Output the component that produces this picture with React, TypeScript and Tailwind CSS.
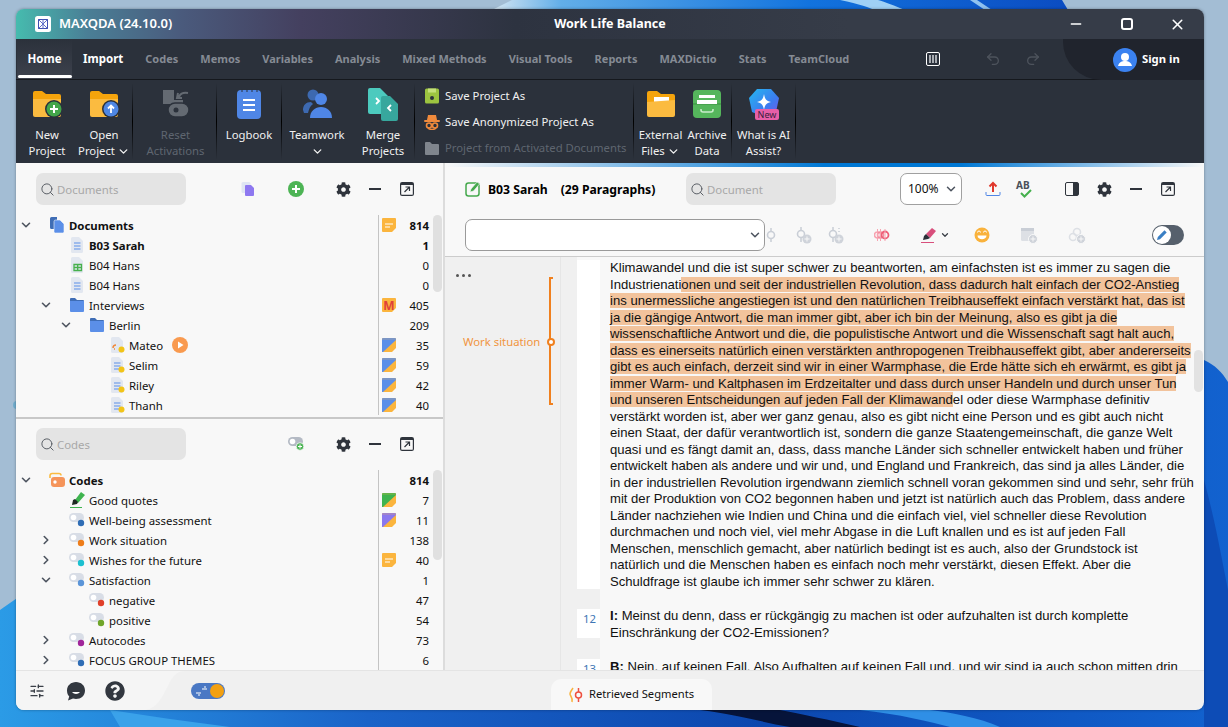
import type { ReactNode } from "react"
import { ChevronDown, ChevronRight, Search, SlidersHorizontal, Undo2, Redo2, Minus, X } from "lucide-react"
import { FaCog, FaQuestionCircle } from "react-icons/fa"

const ui = "font-['Noto_Sans',sans-serif]"

function Wallpaper() {
  return (
    <svg className="absolute inset-0" width="1228" height="727" viewBox="0 0 1228 727">
      <defs>
        <linearGradient id="topBand" x1="0" x2="1" y1="0" y2="0">
          <stop offset="0" stopColor="#d5e6f2" />
          <stop offset="0.12" stopColor="#62aee8" />
          <stop offset="0.55" stopColor="#1273de" />
          <stop offset="1" stopColor="#0b4cc2" />
        </linearGradient>
        <linearGradient id="bottomBand" x1="0" x2="1" y1="0" y2="0">
          <stop offset="0" stopColor="#2b9be6" />
          <stop offset="0.3" stopColor="#1a63c8" />
          <stop offset="0.62" stopColor="#0c47ae" />
          <stop offset="1" stopColor="#1262cf" />
        </linearGradient>
      </defs>
      <rect width="1228" height="727" fill="#a3bdd4" />
      <path d="M492 10 L512 0 H1062 L1068 10 Z" fill="url(#topBand)" />
      <path d="M840 0 C860 4 870 8 875 10 H905 C895 6 885 2 878 0 Z" fill="#9fd0f5" />
      <path d="M970 0 L985 10 H992 L977 0 Z" fill="#8fc2f0" />
      <path d="M0 610 C30 590 60 560 90 600 L1204 640 V360 C1215 365 1222 372 1228 382 V727 H0 Z" fill="url(#bottomBand)" />
      <path d="M1204 480 C1215 520 1222 560 1228 590 V727 H1204 Z" fill="#0d4cb6" />
      <path d="M110 710 C150 716 190 722 230 727 H120 Z" fill="#3aa2ea" />
      <path d="M700 710 C740 715 760 722 790 727 H860 C830 720 800 714 780 710 Z" fill="#06143a" />
      <path d="M860 710 C900 714 930 722 950 727 H1000 C980 718 950 712 930 710 Z" fill="#2f8fe6" />
      <circle cx="17" cy="405" r="4" fill="#3f9fc9" opacity="0.5" />
    </svg>
  )
}

function Sep() {
  return <div className="w-px shrink-0 self-stretch my-[3px] bg-gradient-to-b from-transparent via-black to-transparent" />
}

function Folder({ badge }: { badge?: ReactNode }) {
  return (
    <svg width="32" height="32" viewBox="0 0 32 32">
      <path d="M2 5a2 2 0 0 1 2-2h7l4 3h13a2 2 0 0 1 2 2v4H2z" fill="#f5a40c" />
      <path d="M2 11h28v16a2 2 0 0 1-2 2H4a2 2 0 0 1-2-2z" fill="#fbbb40" />
      {badge}
    </svg>
  )
}

const newBadge = (
  <g>
    <circle cx="23" cy="21" r="9" fill="#2b313b" />
    <circle cx="23" cy="21" r="7.5" fill="#43a64a" />
    <path d="M23 17v8M19 21h8" stroke="#fff" strokeWidth="2" />
  </g>
)
const openBadge = (
  <g>
    <circle cx="23" cy="21" r="9" fill="#2b313b" />
    <circle cx="23" cy="21" r="7.5" fill="#4f87e3" />
    <path d="M23 25v-7M20 20.5l3-3 3 3" stroke="#fff" strokeWidth="1.8" fill="none" />
  </g>
)

function ResetIcon() {
  return (
    <svg width="32" height="32" viewBox="0 0 32 32">
      <path d="M3 2h11v10h9v4H3z" fill="#646a72" />
      <rect x="8" y="15" width="21" height="14" rx="7" fill="#646a72" stroke="#2b313b" strokeWidth="1.5" />
      <circle cx="16" cy="22" r="2.5" fill="#2b313b" />
      <path d="M19 10c0-4 4-6 9-5M18 5l-1 5 5 0" stroke="#646a72" strokeWidth="2" fill="none" />
    </svg>
  )
}

function LogbookIcon() {
  return (
    <svg width="32" height="32" viewBox="0 0 32 32">
      <rect x="4" y="2" width="24" height="29" rx="4" fill="#4f86e6" />
      <path d="M9 1v3M14 1v3M19 1v3M24 1v3" stroke="#2b313b" strokeWidth="1" />
      <path d="M10 12h12M10 17h12M10 22h12" stroke="#fff" strokeWidth="2" />
    </svg>
  )
}

function TeamIcon() {
  return (
    <svg width="32" height="32" viewBox="0 0 32 32">
      <circle cx="12" cy="7" r="5.5" fill="#3d69b0" />
      <path d="M2 22c0-5 3-8 8-8l2 2c-3 2-4 5-5 9H3z" fill="#3d69b0" />
      <circle cx="20" cy="11" r="6" fill="#4f86e6" />
      <path d="M9 30c0-7 5-11 11-11s11 4 11 11z" fill="#4f86e6" />
    </svg>
  )
}

function MergeIcon() {
  return (
    <svg width="34" height="34" viewBox="0 0 34 34">
      <path d="M2 3a2 2 0 0 1 2-2h10l8 8v16a2 2 0 0 1-2 2H4a2 2 0 0 1-2-2z" fill="#4ccabe" />
      <path d="M15 11a2 2 0 0 1 2-2h7l8 8v15a2 2 0 0 1-2 2H17a2 2 0 0 1-2-2z" fill="#37a79d" />
      <path d="M10 11l3 3-3 3" stroke="#fff" strokeWidth="1.8" fill="none" />
      <path d="M25 18l-3 3 3 3" stroke="#fff" strokeWidth="1.8" fill="none" />
    </svg>
  )
}

function ArchiveIcon() {
  return (
    <svg width="30" height="30" viewBox="0 0 30 30">
      <rect x="1" y="1" width="28" height="28" rx="4" fill="#55b65c" />
      <path d="M1 15h28" stroke="#3c8f43" strokeWidth="1" />
      <rect x="7" y="6" width="16" height="3" fill="#fff" />
      <rect x="5" y="11" width="20" height="4" fill="#fff" />
      <path d="M9 20v1a2 2 0 0 0 2 2h8a2 2 0 0 0 2-2v-1" stroke="#c8ecca" strokeWidth="1.6" fill="none" />
    </svg>
  )
}

function ExternalIcon() {
  return (
    <svg width="32" height="32" viewBox="0 0 32 32">
      <path d="M2 5a2 2 0 0 1 2-2h8l4 3h12a2 2 0 0 1 2 2v6H2z" fill="#f5a40c" />
      <rect x="9" y="9" width="15" height="6" fill="#fff" />
      <path d="M2 14l28-2v15a2 2 0 0 1-2 2H4a2 2 0 0 1-2-2z" fill="#fbbb40" />
    </svg>
  )
}

function AiIcon() {
  return (
    <svg width="36" height="34" viewBox="0 0 36 34">
      <defs>
        <linearGradient id="ai" x1="0" x2="1" y1="0" y2="1">
          <stop offset="0" stopColor="#25b8f0" />
          <stop offset="0.6" stopColor="#3c7cf0" />
          <stop offset="1" stopColor="#7a55e8" />
        </linearGradient>
      </defs>
      <path d="M11 2h14l8 9-3 14-12 5-12-5-3-14z" fill="url(#ai)" />
      <path d="M18 7c1 5 2 7 7 8-5 1-6 3-7 8-1-5-2-7-7-8 5-1 6-3 7-8z" fill="#fff" />
      <rect x="9" y="22" width="24" height="11" rx="2" fill="#e85fa8" />
      <text x="21" y="31" textAnchor="middle" fontSize="9" fontFamily="Noto Sans" fill="#3a2040">New</text>
    </svg>
  )
}

function RibbonBtn({ w, icon, lines, dim }: { w: string; icon: ReactNode; lines: ReactNode[]; dim?: boolean }) {
  return (
    <div className={`${w} shrink-0 flex flex-col items-center pt-[8px]`}>
      <div className="h-[32px] flex items-center justify-center">{icon}</div>
      <div className={`mt-[7px] text-center text-[11.3px] leading-[16px] whitespace-nowrap ${dim ? "text-[#5f6670]" : "text-[#f0f0f0]"}`}>
        {lines.map((l, i) => (
          <div key={i} className="flex items-center justify-center h-[16px]">{l}</div>
        ))}
      </div>
    </div>
  )
}

function Drop() {
  return <ChevronDown className="inline w-[13px] h-[13px] ml-[2px]" strokeWidth={2.6} />
}

function TitleBar() {
  return (
    <div className="h-[30px] grid grid-cols-[1fr_auto_1fr] items-center text-white bg-[linear-gradient(90deg,#46bbae_0%,#4a7f96_6%,#4a5a7c_14%,#44405f_24%,#2d3340_42%,#363c48_70%,#363c48_100%)]">
      <div className="flex items-center pl-[19px]">
        <svg width="16" height="16" viewBox="0 0 16 16">
          <rect width="16" height="16" rx="2.5" fill="#fff" />
          <rect x="3.5" y="3.5" width="9" height="9" fill="none" stroke="#3f4fb0" strokeWidth="1" />
          <path d="M3.5 3.5l9 9M12.5 3.5l-9 9M8 3.5v9" stroke="#6070c8" strokeWidth="1" />
        </svg>
        <span className="ml-[8px] text-[13px] font-semibold">MAXQDA (24.10.0)</span>
      </div>
      <div className="text-[12.5px] font-bold">Work Life Balance</div>
      <div className="flex justify-end pr-[1px]">
        <div className="w-[51px] flex justify-center"><Minus className="w-[16px] h-[16px]" strokeWidth={2.2} /></div>
        <div className="w-[51px] flex justify-center items-center"><div className="w-[12px] h-[12px] border-2 border-white rounded-[3px]" /></div>
        <div className="w-[51px] flex justify-center"><X className="w-[17px] h-[17px]" strokeWidth={2.2} /></div>
      </div>
    </div>
  )
}

const tabs = ["Codes", "Memos", "Variables", "Analysis", "Mixed Methods", "Visual Tools", "Reports", "MAXDictio", "Stats", "TeamCloud"]

function TabRow() {
  return (
    <div className="h-[41px] flex items-stretch bg-[#2b313b] border-b border-[#15181d]">
      <div className="ml-px w-[55px] relative flex items-center justify-center text-[11.5px] font-bold text-white bg-gradient-to-b from-[#2b313b] to-[#3d424d]">
        Home
        <div className="absolute bottom-[1px] left-[1px] right-0 h-[3px] rounded-full bg-white" />
      </div>
      <div className="px-[11px] flex items-center text-[11.5px] font-bold text-white">Import</div>
      {tabs.map((t) => (
        <div key={t} className="px-[11px] flex items-center text-[11px] font-bold text-[#858b94]">{t}</div>
      ))}
      <div className="ml-auto flex items-center">
        <div className="w-[14px] h-[14px] border border-white rounded-[2px] flex justify-center gap-[1px] p-[2px]">
          <div className="w-[2px] bg-[#a8acb2]" />
          <div className="w-[2px] bg-[#a8acb2]" />
          <div className="w-[2px] bg-[#a8acb2]" />
        </div>
        <Undo2 className="ml-[45px] w-[16px] h-[16px] text-[#4d535c]" />
        <Redo2 className="ml-[24px] w-[16px] h-[16px] text-[#4d535c]" />
        <div className="ml-[22px] w-[141px] self-stretch -mb-px bg-[#20242d] rounded-bl-[38px] flex items-center pl-[50px]">
          <svg width="24" height="24" viewBox="0 0 24 24">
            <circle cx="12" cy="12" r="12" fill="#3b82f0" />
            <circle cx="12" cy="9" r="4" fill="#fff" />
            <path d="M5 18c1-4 4-5 7-5s6 1 7 5z" fill="#fff" />
          </svg>
          <span className="ml-[5px] text-[11.3px] font-bold text-white">Sign in</span>
        </div>
      </div>
    </div>
  )
}

function Ribbon() {
  return (
    <div className="h-[83px] flex items-stretch pl-[2px] bg-[#2b313b]">
      <RibbonBtn w="w-[58px]" icon={<Folder badge={newBadge} />} lines={["New", "Project"]} />
      <RibbonBtn w="w-[56px]" icon={<Folder badge={openBadge} />} lines={["Open", <>Project<Drop /></>]} />
      <Sep />
      <RibbonBtn w="w-[83px] pl-[2px]" icon={<ResetIcon />} lines={["Reset", "Activations"]} dim />
      <Sep />
      <RibbonBtn w="w-[64px]" icon={<LogbookIcon />} lines={["Logbook"]} />
      <Sep />
      <RibbonBtn w="w-[70px]" icon={<TeamIcon />} lines={["Teamwork", <ChevronDown className="w-[13px] h-[13px]" strokeWidth={2.6} />]} />
      <RibbonBtn w="w-[62px]" icon={<MergeIcon />} lines={["Merge", "Projects"]} />
      <Sep />
      <div className="w-[218px] shrink-0 pt-[3px] text-[11.3px] whitespace-nowrap">
        <div className="h-[26px] flex items-center pl-[9px] text-[#f0f0f0]">
          <svg className="shrink-0" width="16" height="16" viewBox="0 0 16 16">
            <path d="M1 2a1.5 1.5 0 0 1 1.5-1.5h11A1.5 1.5 0 0 1 15 2v12a1.5 1.5 0 0 1-1.5 1.5h-11A1.5 1.5 0 0 1 1 14z" fill="#9cc440" />
            <rect x="4" y="0.5" width="8" height="4" fill="#c4e07a" />
            <circle cx="8" cy="10" r="2" fill="#2b313b" />
          </svg>
          <span className="ml-[5px]">Save Project As</span>
        </div>
        <div className="h-[26px] flex items-center pl-[9px] text-[#f0f0f0]">
          <svg className="shrink-0" width="16" height="16" viewBox="0 0 16 16">
            <path d="M4 1h8l1 5H3z" fill="#f08a3c" />
            <rect x="0" y="6" width="16" height="2" rx="1" fill="#f08a3c" />
            <circle cx="5" cy="11.5" r="2.5" fill="none" stroke="#f08a3c" strokeWidth="1.6" />
            <circle cx="11" cy="11.5" r="2.5" fill="none" stroke="#f08a3c" strokeWidth="1.6" />
            <path d="M4 14c2 2 6 2 8 0" stroke="#f08a3c" strokeWidth="1.5" fill="none" />
          </svg>
          <span className="ml-[5px]">Save Anonymized Project As</span>
        </div>
        <div className="h-[26px] flex items-center pl-[9px] text-[#5f6670]">
          <svg className="shrink-0" width="16" height="16" viewBox="0 0 16 16">
            <path d="M1 3a1 1 0 0 1 1-1h4l2 2h6a1 1 0 0 1 1 1v9a1 1 0 0 1-1 1H2a1 1 0 0 1-1-1z" fill="#7f858d" />
          </svg>
          <span className="ml-[5px]">Project from Activated Documents</span>
        </div>
      </div>
      <Sep />
      <RibbonBtn w="w-[53px]" icon={<ExternalIcon />} lines={["External", <>Files<Drop /></>]} />
      <RibbonBtn w="w-[40px]" icon={<ArchiveIcon />} lines={["Archive", "Data"]} />
      <div className="w-[4px]" />
      <Sep />
      <RibbonBtn w="w-[63px]" icon={<AiIcon />} lines={["What is AI", "Assist?"]} />
      <Sep />
    </div>
  )
}

function DocIcon({ kind, dot }: { kind: "text" | "table" | "media"; dot?: boolean }) {
  return (
    <svg width="16" height="16" viewBox="0 0 16 16">
      <path d="M2 1.5A1.5 1.5 0 0 1 3.5 0H10l4 4v10.5a1.5 1.5 0 0 1-1.5 1.5h-9A1.5 1.5 0 0 1 2 14.5z" fill="#e2e7f0" />
      {kind === "text" && <path d="M5 6h6.5M5 9h6.5M5 12h6.5" stroke="#5b8fe8" strokeWidth="1" />}
      {kind === "table" && <path d="M5 7.5h7.5v6H5zM8.7 7.5v6M5 10.5h7.5" stroke="#46b04c" strokeWidth="1.3" fill="none" />}
      {kind === "media" && <path d="M4 11c0-2 1-3 3-3M5 12h1" stroke="#f08a3c" strokeWidth="1.5" fill="none" />}
      {dot && <circle cx="12.5" cy="12.5" r="3" fill="#f2c418" />}
    </svg>
  )
}

function FolderBlue() {
  return (
    <svg width="16" height="16" viewBox="0 0 16 16">
      <path d="M1 2a1 1 0 0 1 1-1h4l2 2h6a1 1 0 0 1 1 1v3H1z" fill="#3f6db5" />
      <path d="M1 4h14v10a1 1 0 0 1-1 1H2a1 1 0 0 1-1-1z" fill="#5b8fe8" />
    </svg>
  )
}

function DocsRoot() {
  return (
    <svg width="16" height="16" viewBox="0 0 16 16">
      <path d="M1 1.5A1.5 1.5 0 0 1 2.5 0H8v12H2.5A1.5 1.5 0 0 1 1 10.5z" fill="#3f6db5" />
      <path d="M5 4.5A1.5 1.5 0 0 1 6.5 3H11l4 4v7.5a1.5 1.5 0 0 1-1.5 1.5h-7A1.5 1.5 0 0 1 5 14.5z" fill="#5b8fe8" stroke="#f8f8f8" strokeWidth="0.6" />
    </svg>
  )
}

function CodeIcon({ color }: { color: string }) {
  return (
    <svg width="16" height="16" viewBox="0 0 16 16">
      <rect x="0" y="1" width="15" height="9" rx="4.5" fill="#d8dde6" />
      <circle cx="4.5" cy="5.5" r="2.8" fill="#fff" />
      <circle cx="12" cy="11" r="3.2" fill={color} />
    </svg>
  )
}

function CodesRoot() {
  return (
    <svg width="16" height="16" viewBox="0 0 16 16">
      <path d="M1 6V3.5A2 2 0 0 1 3 1.5h7a2 2 0 0 1 2 2" stroke="#fbbb40" strokeWidth="1.6" fill="none" />
      <rect x="2" y="5" width="14" height="10" rx="3" fill="#f5945a" />
      <circle cx="6" cy="10" r="1.7" fill="#fff" />
    </svg>
  )
}

function GreenMarker() {
  return (
    <svg width="16" height="16" viewBox="0 0 16 16">
      <path d="M6 8L12 0l4 3-7 8z" fill="#3eb44f" />
      <path d="M4 8l2-1 3 3-1 2-5 1z" fill="#1f2a24" />
      <path d="M1 15.5h12" stroke="#3eb44f" strokeWidth="1" />
    </svg>
  )
}

function MemoBadge({ corner, letter, lines }: { corner?: string; letter?: boolean; lines?: boolean }) {
  return (
    <svg width="14" height="14" viewBox="0 0 14 14">
      <path d="M1 0h12a1 1 0 0 1 1 1v9l-4 4H1a1 1 0 0 1-1-1V1a1 1 0 0 1 1-1z" fill="#fbb53e" />
      {corner && (
        <g>
          <path d="M0 2h14L1 14H0z" fill={corner} />
          <path d="M1 0h12a1 1 0 0 1 1 1v1H0V1a1 1 0 0 1 1-1z" fill={corner} opacity="0.8" />
        </g>
      )}
      {lines && <path d="M3 6h8M3 9h5" stroke="#fff" strokeWidth="1" />}
      {letter && <text x="7" y="11.5" textAnchor="middle" fontSize="12" fontWeight="700" fontFamily="Noto Sans" fill="#e0413a">M</text>}
    </svg>
  )
}

const indent = ["w-0", "w-5", "w-10", "w-[60px]"]

type RowData = {
  level: number
  open?: boolean
  closed?: boolean
  icon: ReactNode
  label: string
  bold?: boolean
  extra?: ReactNode
  badge?: ReactNode
  count: number
}

function Row({ r }: { r: RowData }) {
  return (
    <div className="h-5 flex items-center text-[11.4px] text-[#111]">
      <div className="w-[362px] flex items-center">
        <div className={indent[r.level]} />
        <div className="w-[20px] flex justify-center text-[#4f5661]">
          {r.open && <ChevronDown className="w-[14px] h-[14px]" strokeWidth={2.8} />}
          {r.closed && <ChevronRight className="w-[14px] h-[14px]" strokeWidth={2.8} />}
        </div>
        <div className="ml-[13px] w-[16px] h-[16px]">{r.icon}</div>
        <span className={`ml-[4px] pt-px whitespace-nowrap ${r.bold ? "font-bold" : ""}`}>{r.label}</span>
        {r.extra}
      </div>
      <div className="flex-1 h-5 border-l border-[#c4c4c4] flex items-center pl-[3px] pr-[14px]">
        <div className="w-[14px] h-[14px]">{r.badge}</div>
        <div className={`flex-1 pt-px text-right ${r.bold ? "font-bold" : ""}`}>{r.count}</div>
      </div>
    </div>
  )
}

const play = (
  <svg className="ml-[9px]" width="16" height="16" viewBox="0 0 16 16">
    <circle cx="8" cy="8" r="8" fill="#f99a4f" />
    <path d="M6 4.5v7l5.5-3.5z" fill="#fff" />
  </svg>
)

const docRows: RowData[] = [
  { level: 0, open: true, icon: <DocsRoot />, label: "Documents", bold: true, badge: <MemoBadge lines />, count: 814 },
  { level: 1, icon: <DocIcon kind="text" />, label: "B03 Sarah", bold: true, count: 1 },
  { level: 1, icon: <DocIcon kind="table" />, label: "B04 Hans", count: 0 },
  { level: 1, icon: <DocIcon kind="text" />, label: "B04 Hans", count: 0 },
  { level: 1, open: true, icon: <FolderBlue />, label: "Interviews", badge: <MemoBadge letter />, count: 405 },
  { level: 2, open: true, icon: <FolderBlue />, label: "Berlin", count: 209 },
  { level: 3, icon: <DocIcon kind="media" dot />, label: "Mateo", extra: play, badge: <MemoBadge corner="#5b8fe8" />, count: 35 },
  { level: 3, icon: <DocIcon kind="text" dot />, label: "Selim", badge: <MemoBadge corner="#5b8fe8" />, count: 59 },
  { level: 3, icon: <DocIcon kind="text" dot />, label: "Riley", badge: <MemoBadge corner="#5b8fe8" />, count: 42 },
  { level: 3, icon: <DocIcon kind="text" dot />, label: "Thanh", badge: <MemoBadge corner="#5b8fe8" />, count: 40 },
]

const codeRows: RowData[] = [
  { level: 0, open: true, icon: <CodesRoot />, label: "Codes", bold: true, count: 814 },
  { level: 1, icon: <GreenMarker />, label: "Good quotes", badge: <MemoBadge corner="#3eb44f" />, count: 7 },
  { level: 1, icon: <CodeIcon color="#2f6db5" />, label: "Well-being assessment", badge: <MemoBadge corner="#8a78ee" />, count: 11 },
  { level: 1, closed: true, icon: <CodeIcon color="#ee7d1a" />, label: "Work situation", count: 138 },
  { level: 1, closed: true, icon: <CodeIcon color="#1cc0d0" />, label: "Wishes for the future", badge: <MemoBadge lines />, count: 40 },
  { level: 1, open: true, icon: <CodeIcon color="#5b95d8" />, label: "Satisfaction", count: 1 },
  { level: 2, icon: <CodeIcon color="#e0402a" />, label: "negative", count: 47 },
  { level: 2, icon: <CodeIcon color="#6fa52a" />, label: "positive", count: 54 },
  { level: 1, closed: true, icon: <CodeIcon color="#a0259a" />, label: "Autocodes", count: 73 },
  { level: 1, closed: true, icon: <CodeIcon color="#2f6db5" />, label: "FOCUS GROUP THEMES", count: 6 },
]

function SearchBox({ placeholder }: { placeholder: string }) {
  return (
    <div className="w-[150px] h-[32px] rounded-[7px] bg-[#e4e4e4] flex items-center pl-[4px] text-[11.4px] text-[#a8a8a8]">
      <Search className="w-[15px] h-[15px] text-[#5a5f66]" strokeWidth={1.6} />
      <span className="ml-[2px] pt-px">{placeholder}</span>
    </div>
  )
}

function Tools() {
  return (
    <>
      <div className="w-[32px] flex justify-center"><FaCog className="w-[15px] h-[15px] text-[#2f343c]" /></div>
      <div className="w-[32px] flex justify-center"><div className="w-[12px] h-[2px] bg-[#2f343c]" /></div>
      <div className="w-[32px] flex justify-center">
        <svg width="14" height="14" viewBox="0 0 14 14" fill="none">
          <rect x="0.6" y="0.6" width="12.8" height="12.8" rx="1.5" stroke="#2f343c" strokeWidth="1.2" />
          <path d="M1 2h12" stroke="#2f343c" strokeWidth="2" />
          <path d="M4.5 10L9.5 5M5.5 5h4v4" stroke="#2f343c" strokeWidth="1.2" />
        </svg>
      </div>
    </>
  )
}

function TreePanel({ placeholder, addIcon, rows, thumb, h }: { placeholder: string; addIcon: ReactNode; rows: RowData[]; thumb: string; h: string }) {
  return (
    <div className={`${h} relative flex flex-col`}>
      <div className={`flex items-center pl-[20px] ${placeholder === "Codes" ? "pt-[9px] h-[51px] pb-[10px]" : "pt-[10px] h-[52px] pb-[10px]"}`}>
        <SearchBox placeholder={placeholder} />
        {addIcon}
        <Tools />
      </div>
      {rows.map((r) => (
        <Row key={r.label + r.count} r={r} />
      ))}
      <div className={`absolute left-[417px] w-[9px] rounded-full bg-[#e0e0e0] ${thumb}`} />
    </div>
  )
}

const addDoc = (
  <>
    <div className="ml-[46px] w-[32px] flex justify-center">
      <svg width="14" height="14" viewBox="0 0 14 14">
        <rect x="0.5" y="0" width="9" height="11" rx="1.5" fill="#dfe5f3" />
        <path d="M4 4a1 1 0 0 1 1-1h5l3 3v7a1 1 0 0 1-1 1H5a1 1 0 0 1-1-1z" fill="#8e78f0" />
      </svg>
    </div>
    <div className="ml-[16px] w-[32px] flex justify-center">
      <svg width="16" height="16" viewBox="0 0 16 16">
        <circle cx="8" cy="8" r="8" fill="#4db455" />
        <path d="M8 4v8M4 8h8" stroke="#fff" strokeWidth="2" />
      </svg>
    </div>
    <div className="ml-[15px]" />
  </>
)

const addCode = (
  <>
    <div className="ml-[94px] w-[32px] flex justify-center">
      <svg width="16" height="14" viewBox="0 0 16 14">
        <rect x="0" y="0" width="15" height="9" rx="4.5" fill="#b4bac4" />
        <circle cx="4.5" cy="4.5" r="2.8" fill="#fff" />
        <circle cx="12" cy="9.5" r="3.8" fill="#4db455" stroke="#f8f8f8" strokeWidth="0.8" />
        <path d="M12 7.5v4M10 9.5h4" stroke="#fff" strokeWidth="1" />
      </svg>
    </div>
    <div className="ml-[15px]" />
  </>
)

function Dim({ children }: { children: ReactNode }) {
  return <svg width="18" height="18" viewBox="0 0 18 18" fill="none">{children}</svg>
}

const pinDim = (
  <>
    <path d="M7 1v3M7 12v4" stroke="#c9ced6" strokeWidth="1.5" />
    <circle cx="7" cy="8" r="3.5" stroke="#c9ced6" strokeWidth="1.6" />
  </>
)

const dimPlus = (
  <>
    <circle cx="13" cy="13" r="4.5" fill="#cfd3da" />
    <path d="M13 10.5v5M10.5 13h5" stroke="#f8f8f8" strokeWidth="1" />
  </>
)

function DocToolbar() {
  return (
    <div className="flex items-center pt-[6px] h-[38px]">
      <div className="w-[241px] flex items-center pl-[20px] text-[12.2px] font-bold text-black whitespace-nowrap">
        <svg width="16" height="16" viewBox="0 0 16 16">
          <rect x="1" y="2" width="13" height="13" rx="2.5" fill="none" stroke="#45a94d" strokeWidth="1.5" />
          <path d="M5 11l1-3 6-7 2.5 2-6 7z" fill="#45a94d" stroke="#f8f8f8" strokeWidth="0.6" />
        </svg>
        <span className="ml-[7px] pt-[2px]">B03 Sarah</span>
        <span className="ml-[13px] pt-[2px]">(29 Paragraphs)</span>
      </div>
      <SearchBox placeholder="Document" />
      <div className="ml-[64px] w-[62px] h-[32px] rounded-[7px] bg-white border border-[#a0a0a0] flex items-center justify-between pl-[7px] pr-[3px] text-[12px] text-[#111]">
        100%
        <ChevronDown className="w-[14px] h-[14px] text-[#4f5661]" strokeWidth={2.6} />
      </div>
      <div className="ml-[15px] w-[31px] flex justify-center">
        <svg width="16" height="16" viewBox="0 0 16 16" fill="none">
          <path d="M1 11v2.5a1 1 0 0 0 1 1h12a1 1 0 0 0 1-1V11" stroke="#4f86e6" strokeWidth="1" />
          <path d="M8 11V2M4.5 5.5L8 2l3.5 3.5" stroke="#e0382c" strokeWidth="2" />
        </svg>
      </div>
      <div className="w-[32px] flex justify-center">
        <div className="relative w-[16px] h-[18px] text-[10px] leading-[11px] font-bold text-[#4a505a]">
          AB
          <svg className="absolute left-[4px] top-[9px]" width="12" height="9" viewBox="0 0 12 9" fill="none">
            <path d="M1 4l3.5 3.5L11 1" stroke="#45b04d" strokeWidth="2" />
          </svg>
        </div>
      </div>
      <div className="ml-[16px] w-[32px] flex justify-center">
        <div className="w-[14px] h-[14px] border-[1.5px] border-[#2f343c] rounded-[2px] flex justify-end">
          <div className="w-[5px] bg-[#2f343c]" />
        </div>
      </div>
      <Tools />
    </div>
  )
}

function CodingToolbar() {
  return (
    <div className="flex items-center pl-[20px] mt-[14px] h-[32px]">
      <div className="w-[300px] h-[32px] bg-white border border-[#9a9a9a] rounded-[7px] flex items-center justify-end pr-[2px]">
        <ChevronDown className="w-[14px] h-[14px] text-[#4f5661]" strokeWidth={2.6} />
      </div>
      <div className="w-[12px] flex justify-center">
        <svg width="10" height="16" viewBox="0 0 10 16" fill="none">
          <path d="M5 1v3M5 12v3" stroke="#c9ced6" strokeWidth="1.5" />
          <circle cx="5" cy="8" r="3.5" stroke="#c9ced6" strokeWidth="1.6" />
        </svg>
      </div>
      <div className="ml-[10px] w-[32px] flex justify-center"><Dim>{pinDim}{dimPlus}</Dim></div>
      <div className="w-[32px] flex justify-center"><Dim>{pinDim}<path d="M13 2v1M13 5v1" stroke="#c9ced6" strokeWidth="1.5" />{dimPlus}</Dim></div>
      <div className="ml-[15px] w-[32px] flex justify-center">
        <svg width="16" height="16" viewBox="0 0 16 16" fill="none">
          <circle cx="3.5" cy="8" r="3" stroke="#f7a3b0" strokeWidth="1.5" />
          <circle cx="6.5" cy="8" r="3" stroke="#f28c9e" strokeWidth="1.5" />
          <circle cx="11" cy="8" r="3.5" stroke="#ee5c76" strokeWidth="1.8" />
          <path d="M3.5 2v12M6.5 2v12M11 2v12" stroke="#f7a3b0" strokeWidth="1" />
        </svg>
      </div>
      <div className="ml-[21px] w-[20px] flex justify-center">
        <svg width="16" height="16" viewBox="0 0 16 16">
          <path d="M5 7l6-6 4 3-6 7z" fill="#d84f7c" />
          <path d="M3 9l2-2 4 4-2 1-5 1z" fill="#2b2f38" />
          <path d="M0 15.5h13" stroke="#d84f7c" strokeWidth="1" />
        </svg>
      </div>
      <div className="w-[12px] flex justify-center"><ChevronDown className="w-[10px] h-[10px] text-[#3a3f47]" strokeWidth={3} /></div>
      <div className="ml-[15px] w-[32px] flex justify-center">
        <svg width="16" height="16" viewBox="0 0 16 16">
          <circle cx="8" cy="8" r="7.5" fill="#f9b23c" />
          <path d="M3.5 5.5a1.5 1.5 0 0 1 3 0M9.5 5.5a1.5 1.5 0 0 1 3 0" stroke="#fff" strokeWidth="1" fill="none" />
          <path d="M3.5 8.5h9c0 5-9 5-9 0z" fill="#fff" />
        </svg>
      </div>
      <div className="ml-[15px] w-[32px] flex justify-center">
        <Dim>
          <rect x="1" y="2" width="13" height="13" rx="1.5" fill="#dde0e5" />
          <rect x="1" y="2" width="13" height="3" fill="#c9ced6" />
          <circle cx="13" cy="13" r="4.5" fill="#cfd3da" stroke="#f8f8f8" />
          <path d="M13 10.5v5M10.5 13h5" stroke="#f8f8f8" strokeWidth="1" />
        </Dim>
      </div>
      <div className="ml-[16px] w-[32px] flex justify-center">
        <Dim>
          <circle cx="9" cy="6" r="3.5" stroke="#dde0e5" strokeWidth="1.6" />
          <circle cx="5" cy="11" r="3.5" stroke="#dde0e5" strokeWidth="1.6" />
          <circle cx="13" cy="13" r="4.5" fill="#cfd3da" stroke="#f8f8f8" />
          <path d="M13 10.5v5M10.5 13h5" stroke="#f8f8f8" strokeWidth="1" />
        </Dim>
      </div>
      <div className="ml-[59px] w-[32px] h-[20px] rounded-full bg-[#56606c] flex items-center pl-[1px]">
        <div className="w-[18px] h-[18px] rounded-full bg-white flex items-center justify-center">
          <svg width="12" height="12" viewBox="0 0 12 12">
            <path d="M1 11l.8-3L8.5 1.3l2.2 2.2L4 10.2z" fill="#3a7fc4" />
          </svg>
        </div>
      </div>
    </div>
  )
}

// one entry per line: text before the coded segment / inside it / after it
const lines: { pre?: string; hl?: string; post?: string }[] = [
  { pre: "Klimawandel und die ist super schwer zu beantworten, am einfachsten ist es immer zu sagen die" },
  { pre: "Industrienati", hl: "onen und seit der industriellen Revolution, dass dadurch halt einfach der CO2-Anstieg" },
  { hl: "ins unermessliche angestiegen ist und den natürlichen Treibhauseffekt einfach verstärkt hat, das ist" },
  { hl: "ja die gängige Antwort, die man immer gibt, aber ich bin der Meinung, also es gibt ja die" },
  { hl: "wissenschaftliche Antwort und die, die populistische Antwort und die Wissenschaft sagt halt auch," },
  { hl: "dass es einerseits natürlich einen verstärkten anthropogenen Treibhauseffekt gibt, aber andererseits" },
  { hl: "gibt es auch einfach, derzeit sind wir in einer Warmphase, die Erde hätte sich eh erwärmt, es gibt ja" },
  { hl: "immer Warm- und Kaltphasen im Erdzeitalter und dass durch unser Handeln und durch unser Tun" },
  { hl: "und unseren Entscheidungen auf jeden Fall der Klimawand", post: "el oder diese Warmphase definitiv" },
  { pre: "verstärkt worden ist, aber wer ganz genau, also es gibt nicht eine Person und es gibt auch nicht" },
  { pre: "einen Staat, der dafür verantwortlich ist, sondern die ganze Staatengemeinschaft, die ganze Welt" },
  { pre: "quasi und es fängt damit an, dass, dass manche Länder sich schneller entwickelt haben und früher" },
  { pre: "entwickelt haben als andere und wir und, und England und Frankreich, das sind ja alles Länder, die" },
  { pre: "in der industriellen Revolution irgendwann ziemlich schnell voran gekommen sind und sehr, sehr früh" },
  { pre: "mit der Produktion von CO2 begonnen haben und jetzt ist natürlich auch das Problem, dass andere" },
  { pre: "Länder nachziehen wie Indien und China und die einfach viel, viel schneller diese Revolution" },
  { pre: "durchmachen und noch viel, viel mehr Abgase in die Luft knallen und es ist auf jeden Fall" },
  { pre: "Menschen, menschlich gemacht, aber natürlich bedingt ist es auch, also der Grundstock ist" },
  { pre: "natürlich und die Menschen haben es einfach noch mehr verstärkt, diesen Effekt. Aber die" },
  { pre: "Schuldfrage ist glaube ich immer sehr schwer zu klären." },
]

function DocText() {
  return (
    <div className="flex-1 min-w-0 overflow-hidden bg-[#f8f8f8] font-['Liberation_Sans',sans-serif] text-[13.1px] leading-[16.5px] text-[#111]">
      <div className="flex pt-[3px]">
        <div className="w-[23px] shrink-0 bg-[#f0f0f0]">
          <div className="h-[329px] bg-white" />
        </div>
        <div className="pl-[10px] pb-[18px] whitespace-nowrap">
          {lines.map((l, i) => (
            <div key={i} className="h-[16.5px]">
              {l.pre}
              {l.hl && <span className="bg-[#f2c39c]">{l.hl}</span>}
              {l.post}
            </div>
          ))}
        </div>
      </div>
      <div className="flex">
        <div className="w-[23px] shrink-0 bg-[#f0f0f0] pt-px">
          <div className="h-[29px] bg-white pt-[2px] pr-[4px] text-right text-[11.4px] text-[#3f76b5] font-['Noto_Sans',sans-serif]">12</div>
        </div>
        <div className="pl-[10px] pb-[18px] whitespace-nowrap">
          <div className="h-[16.5px]"><b>I:</b> Meinst du denn, dass er rückgängig zu machen ist oder aufzuhalten ist durch komplette</div>
          <div className="h-[16.5px]">Einschränkung der CO2-Emissionen?</div>
        </div>
      </div>
      <div className="flex">
        <div className="w-[23px] shrink-0 bg-[#f0f0f0]">
          <div className="h-[29px] bg-white pt-[2px] pr-[4px] text-right text-[11.4px] text-[#3f76b5] font-['Noto_Sans',sans-serif]">13</div>
        </div>
        <div className="pl-[10px] whitespace-nowrap">
          <b>B:</b> Nein, auf keinen Fall. Also Aufhalten auf keinen Fall und, und wir sind ja auch schon mitten drin
        </div>
      </div>
    </div>
  )
}

function DocPane() {
  return (
    <div className="flex-1 min-w-0 flex flex-col bg-[#f8f8f8]">
      <div className="h-[4px] bg-[linear-gradient(90deg,#f8f8f8_0%,#0078d4_50%,#0078d4_68%,#f8f8f8_100%)]" />
      <div className="h-[89px]">
        <DocToolbar />
        <CodingToolbar />
      </div>
      <div className="h-px bg-[#cccccc]" />
      <div className="flex-1 min-h-0 flex relative">
        <div className="w-[132px] shrink-0 relative bg-[#f0f0f0]">
          <div className="absolute left-[115px] top-0 bottom-0 w-px bg-[#e6e6e6]" />
          <div className="absolute left-[11px] top-[17px] flex gap-[3px]">
            <div className="w-[3px] h-[3px] rounded-full bg-[#555]" />
            <div className="w-[3px] h-[3px] rounded-full bg-[#555]" />
            <div className="w-[3px] h-[3px] rounded-full bg-[#555]" />
          </div>
          <div className="absolute left-[104px] top-[20px] h-[128px] w-[4px] border-l-2 border-t-2 border-b-2 border-[#f0801e]" />
          <div className="absolute left-[101.5px] top-[80.5px] w-[8px] h-[8px] rounded-full border-2 border-[#f0801e] bg-white" />
          <div className="absolute left-[18px] top-[77px] text-[11.3px] text-[#f0953f] whitespace-nowrap">Work situation</div>
        </div>
        <DocText />
        <div className="absolute right-[1px] top-[93px] w-[9px] h-[42px] rounded-full bg-[#e2e2e2]" />
      </div>
    </div>
  )
}

function BottomBar() {
  return (
    <div className="h-[40px] relative flex items-center bg-[#f0f0f0] border-t border-[#e4e4e4]">
      <svg className="absolute left-0 top-0" width="184" height="40" viewBox="0 0 184 40">
        <path d="M0 0H168C150 0 152 34 130 39H0z" fill="#f5f5f5" />
      </svg>
      <div className="relative flex items-center w-[535px]">
        <SlidersHorizontal className="ml-[13px] w-[16px] h-[16px] text-[#3a3f47]" strokeWidth={2} />
        <svg className="ml-[21px]" width="20" height="20" viewBox="0 0 20 20">
          <path d="M10 1c5 0 9 3.5 9 8.5S15 18 10 18c-1 0-2-.2-3-.5L2 19.500l1.200-4C1.800 14 1 12 1 9.500 1 4.500 5 1 10 1z" fill="#32373f" />
          <path d="M6 11c2 2.5 6 2.5 8 0z" fill="#fff" />
        </svg>
        <FaQuestionCircle className="ml-[19px] w-[20px] h-[20px] text-[#32373f]" />
        <div className="ml-[66px] w-[34px] h-[16px] rounded-full bg-[#4a78c4] relative">
          <svg className="absolute left-[3px] top-[3px]" width="16" height="10" viewBox="0 0 16 10">
            <path d="M8 3h5M10 1h2M2 7h5M4 9h2" stroke="#fff" strokeWidth="1.2" />
          </svg>
          <div className="absolute right-[1px] top-[1px] w-[14px] h-[14px] rounded-full bg-[#f2a012]" />
        </div>
      </div>
      <div className="relative self-end w-[161px] h-[31px] rounded-t-[10px] bg-[#f8f8f8] flex items-center pl-[17px] text-[11.2px] text-[#111]">
        <svg width="16" height="16" viewBox="0 0 16 16" fill="none">
          <path d="M5 1C3 4 2 5 2 7c0 2 3 3 2 8" stroke="#f9b23c" strokeWidth="1.5" />
          <circle cx="10.5" cy="8" r="3" stroke="#ee5040" strokeWidth="1.5" />
          <path d="M10.5 1v4M10.5 11v4" stroke="#ee5040" strokeWidth="1.5" />
        </svg>
        <span className="ml-[5px] whitespace-nowrap">Retrieved Segments</span>
      </div>
    </div>
  )
}

export default function App() {
  return (
    <div className={`relative w-[1228px] h-[727px] overflow-hidden ${ui}`}>
      <Wallpaper />
      <div className="relative ml-[16px] pt-[9px] w-[1188px]">
        <div className="h-[701px] flex flex-col rounded-[8px] overflow-hidden shadow-[0_0_3px_rgba(0,0,0,0.35)]">
          <TitleBar />
          <TabRow />
          <Ribbon />
          <div className="h-[507px] flex bg-[#f8f8f8]">
            <div className="w-[429px] shrink-0 flex flex-col border-r-2 border-[#dcdcdc]">
              <TreePanel h="h-[254px]" placeholder="Documents" addIcon={addDoc} rows={docRows} thumb="top-[52px] h-[77px]" />
              <div className="h-[2px] bg-[#c8c8c8]" />
              <TreePanel h="h-[251px]" placeholder="Codes" addIcon={addCode} rows={codeRows} thumb="top-[51px] h-[90px]" />
            </div>
            <DocPane />
          </div>
          <BottomBar />
        </div>
      </div>
    </div>
  )
}
